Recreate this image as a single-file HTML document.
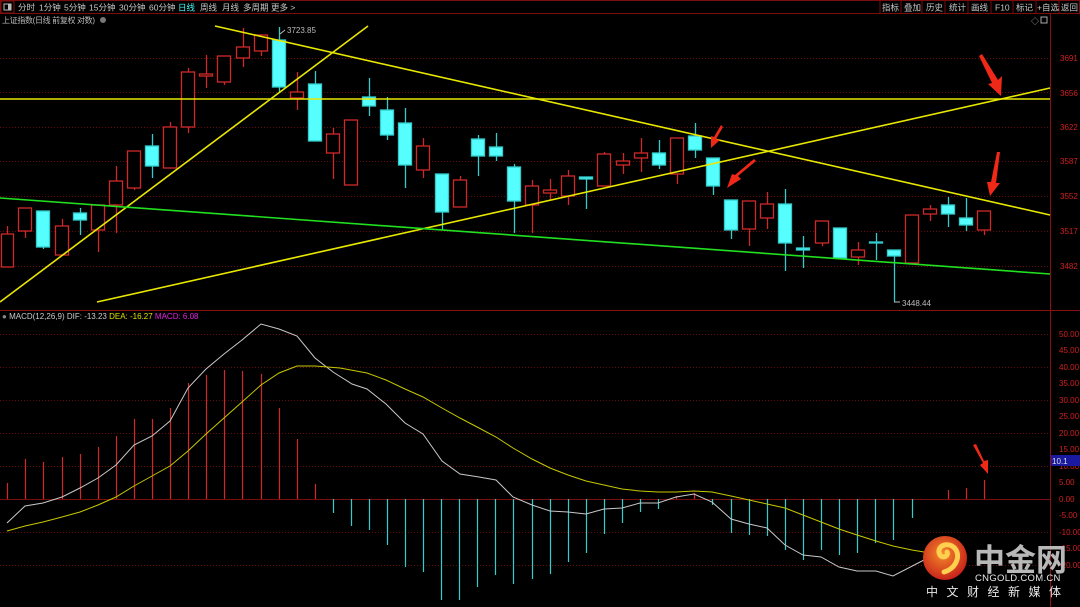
<!DOCTYPE html>
<html><head><meta charset="utf-8"><style>
html,body{margin:0;padding:0;background:#000;width:1080px;height:607px;overflow:hidden}
svg{display:block}
text{font-family:"Liberation Sans","Noto Sans CJK SC",sans-serif}
</style></head><body>
<svg width="1080" height="607" viewBox="0 0 1080 607" xmlns="http://www.w3.org/2000/svg">
<rect width="1080" height="607" fill="#000"/>
<!-- toolbar -->
<rect x="0.5" y="0.5" width="1079" height="13" fill="#000" stroke="#7a0d0d"/>
<rect x="1" y="1" width="13" height="12" fill="none" stroke="#8a1010"/>
<rect x="4" y="4" width="7" height="6" fill="none" stroke="#bbb" stroke-width="1"/>
<rect x="8" y="4" width="3" height="6" fill="#bbb"/>
<g font-size="8.5" fill="#c8c8c8">
<text x="18" y="10.5">分时</text><text x="39" y="10.5">1分钟</text><text x="64" y="10.5">5分钟</text><text x="89" y="10.5">15分钟</text><text x="119" y="10.5">30分钟</text><text x="149" y="10.5">60分钟</text><text x="178" y="10.5" fill="#4ff">日线</text><text x="200" y="10.5">周线</text><text x="222" y="10.5">月线</text><text x="243" y="10.5">多周期</text><text x="271" y="10.5">更多 &gt;</text>
</g>
<g stroke="#7a0d0d"><line x1="880" y1="0" x2="880" y2="14"/><line x1="901" y1="0" x2="901" y2="14"/><line x1="922" y1="0" x2="922" y2="14"/><line x1="945" y1="0" x2="945" y2="14"/><line x1="968" y1="0" x2="968" y2="14"/><line x1="991" y1="0" x2="991" y2="14"/><line x1="1013" y1="0" x2="1013" y2="14"/><line x1="1036" y1="0" x2="1036" y2="14"/><line x1="1059" y1="0" x2="1059" y2="14"/></g>
<g font-size="8.5" fill="#c8c8c8"><text x="882" y="10.5">指标</text><text x="904" y="10.5">叠加</text><text x="926" y="10.5">历史</text><text x="949" y="10.5">统计</text><text x="971" y="10.5">画线</text><text x="995" y="10.5">F10</text><text x="1016" y="10.5">标记</text><text x="1037" y="10.5">+自选</text><text x="1061" y="10.5">返回</text></g>
<text x="2" y="23" font-size="8" fill="#bbb" textLength="93">上证指数(日线 前复权 对数)</text>
<circle cx="103" cy="20" r="3" fill="#777"/>
<text x="1031" y="24" font-size="8" fill="#aaa">◇</text><rect x="1041" y="17" width="6" height="6" fill="none" stroke="#aaa"/>
<!-- grid -->
<g stroke="#6a0a0a" stroke-dasharray="1,2" stroke-width="1">
<line x1="0" y1="58.5" x2="1050" y2="58.5"/><line x1="0" y1="92.5" x2="1050" y2="92.5"/><line x1="0" y1="127.5" x2="1050" y2="127.5"/><line x1="0" y1="161.5" x2="1050" y2="161.5"/><line x1="0" y1="196.5" x2="1050" y2="196.5"/><line x1="0" y1="231.5" x2="1050" y2="231.5"/><line x1="0" y1="266.5" x2="1050" y2="266.5"/>
<line x1="0" y1="334.5" x2="1050" y2="334.5"/><line x1="0" y1="367.5" x2="1050" y2="367.5"/><line x1="0" y1="400.5" x2="1050" y2="400.5"/><line x1="0" y1="433.5" x2="1050" y2="433.5"/><line x1="0" y1="466.5" x2="1050" y2="466.5"/><line x1="0" y1="532.5" x2="1050" y2="532.5"/><line x1="0" y1="565.5" x2="1050" y2="565.5"/>
</g>
<line x1="0" y1="499.5" x2="1050" y2="499.5" stroke="#7a0d0d"/>
<line x1="0" y1="310.5" x2="1080" y2="310.5" stroke="#8a1010"/>
<line x1="1050.5" y1="14" x2="1050.5" y2="607" stroke="#8a1010"/>
<g font-size="8" fill="#d02020">
<text x="1060" y="61">3691</text><text x="1060" y="96">3656</text><text x="1060" y="130">3622</text><text x="1060" y="164">3587</text><text x="1060" y="199">3552</text><text x="1060" y="234">3517</text><text x="1060" y="269">3482</text>
</g>
<g font-size="8" fill="#d02020">
<text x="1059" y="337">50.00</text><text x="1059" y="353">45.00</text><text x="1059" y="370">40.00</text><text x="1059" y="386">35.00</text><text x="1059" y="403">30.00</text><text x="1059" y="419">25.00</text><text x="1059" y="436">20.00</text><text x="1059" y="452">15.00</text><text x="1059" y="469">10.00</text><text x="1059" y="485">5.00</text><text x="1059" y="502">0.00</text><text x="1059" y="518">-5.00</text><text x="1059" y="535">-10.00</text><text x="1059" y="551">-15.00</text><text x="1059" y="568">-20.00</text>
</g>
<rect x="1051" y="455" width="29" height="11" fill="#1a1aa0"/>
<text x="1052" y="464" font-size="8" fill="#ddd">10.1</text>
<!-- candles -->
<g stroke-width="1.3">
<g stroke="#d02828" fill="#000">
<line x1="7.5" y1="226" x2="7.5" y2="234"/><rect x="1.5" y="234" width="12" height="33"/>
<line x1="25.5" y1="231" x2="25.5" y2="238"/><rect x="18.5" y="208" width="13" height="23"/>
<line x1="62.5" y1="219" x2="62.5" y2="226"/><rect x="55.5" y="226" width="13" height="29"/>
<line x1="98.5" y1="230" x2="98.5" y2="252"/><rect x="91.5" y="205" width="13" height="25"/>
<line x1="116.5" y1="166" x2="116.5" y2="233"/><rect x="109.5" y="181" width="13" height="24"/>
<line x1="134.5" y1="188" x2="134.5" y2="190"/><rect x="127.5" y="151" width="13" height="37"/>
<line x1="170.5" y1="122" x2="170.5" y2="127"/><rect x="163.5" y="127" width="13" height="41"/>
<line x1="188.5" y1="68" x2="188.5" y2="133"/><rect x="181.5" y="72" width="13" height="55"/>
<line x1="206.5" y1="55" x2="206.5" y2="88"/><rect x="199.5" y="74" width="13" height="2"/>
<line x1="224.5" y1="82" x2="224.5" y2="85"/><rect x="217.5" y="56" width="13" height="26"/>
<line x1="243.5" y1="28" x2="243.5" y2="67"/><rect x="236.5" y="47" width="13" height="11"/>
<line x1="261.5" y1="51" x2="261.5" y2="56"/><rect x="254.5" y="35" width="13" height="16"/>
<line x1="297.5" y1="72" x2="297.5" y2="110"/><rect x="290.5" y="92" width="13" height="6"/>
<line x1="333.5" y1="128" x2="333.5" y2="179"/><rect x="326.5" y="134" width="13" height="19"/>
<rect x="344.5" y="120" width="13" height="65"/>
<line x1="423.5" y1="138" x2="423.5" y2="178"/><rect x="416.5" y="146" width="13" height="24"/>
<line x1="460.5" y1="176" x2="460.5" y2="180"/><rect x="453.5" y="180" width="13" height="27"/>
<line x1="532.5" y1="180" x2="532.5" y2="233"/><rect x="525.5" y="186" width="13" height="19"/>
<line x1="550.5" y1="179" x2="550.5" y2="200"/><rect x="543.5" y="190" width="13" height="3"/>
<line x1="568.5" y1="170" x2="568.5" y2="205"/><rect x="561.5" y="176" width="13" height="20"/>
<line x1="604.5" y1="152" x2="604.5" y2="154"/><rect x="597.5" y="154" width="13" height="32"/>
<line x1="623.5" y1="153" x2="623.5" y2="174"/><rect x="616.5" y="161" width="13" height="4"/>
<line x1="641.5" y1="138" x2="641.5" y2="172"/><rect x="634.5" y="153" width="13" height="5"/>
<line x1="677.5" y1="174" x2="677.5" y2="184"/><rect x="670.5" y="138" width="13" height="36"/>
<line x1="749.5" y1="229" x2="749.5" y2="246"/><rect x="742.5" y="201" width="13" height="28"/>
<line x1="767.5" y1="192" x2="767.5" y2="229"/><rect x="760.5" y="204" width="13" height="14"/>
<line x1="822.5" y1="243" x2="822.5" y2="246"/><rect x="815.5" y="221" width="13" height="22"/>
<line x1="858.5" y1="242" x2="858.5" y2="265"/><rect x="851.5" y="250" width="13" height="7"/>
<rect x="905.5" y="215" width="13" height="48"/>
<line x1="930.5" y1="205" x2="930.5" y2="221"/><rect x="923.5" y="209" width="13" height="5"/>
<line x1="984.5" y1="230" x2="984.5" y2="235"/><rect x="977.5" y="211" width="13" height="19"/>
</g>
<g stroke="#3cc" fill="#5ff">
<line x1="43.5" y1="247" x2="43.5" y2="249"/><rect x="36.5" y="211" width="13" height="36"/>
<line x1="80.5" y1="208" x2="80.5" y2="235"/><rect x="73.5" y="213" width="13" height="7"/>
<line x1="152.5" y1="134" x2="152.5" y2="178"/><rect x="145.5" y="146" width="13" height="20"/>
<line x1="279.5" y1="27" x2="279.5" y2="93"/><rect x="272.5" y="40" width="13" height="47"/>
<line x1="315.5" y1="71" x2="315.5" y2="84"/><rect x="308.5" y="84" width="13" height="57"/>
<line x1="369.5" y1="78" x2="369.5" y2="116"/><rect x="362.5" y="97" width="13" height="9"/>
<line x1="387.5" y1="97" x2="387.5" y2="140"/><rect x="380.5" y="110" width="13" height="25"/>
<line x1="405.5" y1="108" x2="405.5" y2="188"/><rect x="398.5" y="123" width="13" height="42"/>
<line x1="442.5" y1="212" x2="442.5" y2="230"/><rect x="435.5" y="174" width="13" height="38"/>
<line x1="478.5" y1="135" x2="478.5" y2="176"/><rect x="471.5" y="139" width="13" height="17"/>
<line x1="496.5" y1="133" x2="496.5" y2="161"/><rect x="489.5" y="147" width="13" height="9"/>
<line x1="514.5" y1="164" x2="514.5" y2="233"/><rect x="507.5" y="167" width="13" height="34"/>
<line x1="586.5" y1="177" x2="586.5" y2="209"/><rect x="579.5" y="177" width="13" height="2"/>
<line x1="659.5" y1="140" x2="659.5" y2="169"/><rect x="652.5" y="153" width="13" height="12"/>
<line x1="695.5" y1="123" x2="695.5" y2="158"/><rect x="688.5" y="136" width="13" height="14"/>
<line x1="713.5" y1="186" x2="713.5" y2="195"/><rect x="706.5" y="158" width="13" height="28"/>
<line x1="731.5" y1="230" x2="731.5" y2="239"/><rect x="724.5" y="200" width="13" height="30"/>
<line x1="785.5" y1="189" x2="785.5" y2="271"/><rect x="778.5" y="204" width="13" height="39"/>
<line x1="803.5" y1="236" x2="803.5" y2="268"/><rect x="796.5" y="248" width="13" height="2"/>
<rect x="833.5" y="228" width="13" height="30"/>
<line x1="876.5" y1="233" x2="876.5" y2="260"/><rect x="869.5" y="242" width="13" height="1"/>
<line x1="894.5" y1="256" x2="894.5" y2="302"/><rect x="887.5" y="250" width="13" height="6"/>
<line x1="948.5" y1="197" x2="948.5" y2="227"/><rect x="941.5" y="205" width="13" height="9"/>
<line x1="966.5" y1="198" x2="966.5" y2="231"/><rect x="959.5" y="218" width="13" height="7"/>
</g>
</g>
<g font-size="8" fill="#bbb"><text x="287" y="33">3723.85</text><text x="902" y="306">3448.44</text></g>
<path d="M280 34 L285 30 M894 302 L900 302" stroke="#bbb" fill="none"/>
<!-- trend lines -->
<g stroke-width="1.6" fill="none">
<line x1="0" y1="99" x2="1050" y2="99" stroke="#e8e800"/>
<line x1="0" y1="302" x2="368" y2="26" stroke="#e8e800"/>
<line x1="215" y1="26" x2="1050" y2="215" stroke="#e8e800"/>
<line x1="97" y1="302" x2="1050" y2="88" stroke="#e8e800"/>
<line x1="0" y1="198" x2="1050" y2="274" stroke="#20e020"/>
</g>
<!-- arrows -->
<g fill="#f02818">
<polygon points="979,56 982,54 998,80 1002,76 1001,96 988,84 992,83"/>
<polygon points="721,125 723,127 716,139 720,140 711,148 711,136 714,137"/>
<polygon points="754,159 756,161 738,176 741,179 727,188 732,174 735,175"/>
<polygon points="997,152 1000,152 996,183 1000,183 990,196 987,182 991,182"/>
<polygon points="973,445 976,444 984,461 988,460 988,474 980,465 983,463"/>
</g>
<!-- MACD -->
<text x="2" y="319" font-size="8" fill="#ccc"><tspan fill="#888">●</tspan> MACD(12,26,9)  DIF: -13.23 <tspan fill="#e0e000">DEA: -16.27</tspan> <tspan fill="#e020e0">MACD: 6.08</tspan></text>
<g stroke="#d02828" stroke-width="1.2">
<line x1="7.5" y1="499" x2="7.5" y2="483"/><line x1="25.5" y1="499" x2="25.5" y2="459"/><line x1="43.5" y1="499" x2="43.5" y2="462"/><line x1="62.5" y1="499" x2="62.5" y2="457"/><line x1="80.5" y1="499" x2="80.5" y2="454"/><line x1="98.5" y1="499" x2="98.5" y2="447"/><line x1="116.5" y1="499" x2="116.5" y2="436"/><line x1="134.5" y1="499" x2="134.5" y2="419"/><line x1="152.5" y1="499" x2="152.5" y2="419"/><line x1="170.5" y1="499" x2="170.5" y2="408"/><line x1="188.5" y1="499" x2="188.5" y2="383"/><line x1="206.5" y1="499" x2="206.5" y2="375"/><line x1="224.5" y1="499" x2="224.5" y2="370"/><line x1="242.5" y1="499" x2="242.5" y2="371"/><line x1="261.5" y1="499" x2="261.5" y2="374"/><line x1="279.5" y1="499" x2="279.5" y2="408"/><line x1="297.5" y1="499" x2="297.5" y2="439"/><line x1="315.5" y1="499" x2="315.5" y2="484"/>
<line x1="676.5" y1="499" x2="676.5" y2="496"/><line x1="694.5" y1="499" x2="694.5" y2="493"/>
<line x1="948.5" y1="499" x2="948.5" y2="490"/><line x1="966.5" y1="499" x2="966.5" y2="488"/><line x1="984.5" y1="499" x2="984.5" y2="480"/>
</g>
<g stroke="#3cc" stroke-width="1.2">
<line x1="333.5" y1="499" x2="333.5" y2="513"/><line x1="351.5" y1="499" x2="351.5" y2="526"/><line x1="369.5" y1="499" x2="369.5" y2="530"/><line x1="387.5" y1="499" x2="387.5" y2="545"/><line x1="405.5" y1="499" x2="405.5" y2="567"/><line x1="423.5" y1="499" x2="423.5" y2="572"/><line x1="441.5" y1="499" x2="441.5" y2="600"/><line x1="459.5" y1="499" x2="459.5" y2="600"/><line x1="477.5" y1="499" x2="477.5" y2="587"/><line x1="495.5" y1="499" x2="495.5" y2="575"/><line x1="513.5" y1="499" x2="513.5" y2="584"/><line x1="532.5" y1="499" x2="532.5" y2="579"/><line x1="550.5" y1="499" x2="550.5" y2="574"/><line x1="568.5" y1="499" x2="568.5" y2="562"/><line x1="586.5" y1="499" x2="586.5" y2="553"/><line x1="604.5" y1="499" x2="604.5" y2="534"/><line x1="622.5" y1="499" x2="622.5" y2="523"/><line x1="640.5" y1="499" x2="640.5" y2="512"/><line x1="658.5" y1="499" x2="658.5" y2="509"/><line x1="712.5" y1="499" x2="712.5" y2="505"/><line x1="731.5" y1="499" x2="731.5" y2="533"/><line x1="749.5" y1="499" x2="749.5" y2="535"/><line x1="767.5" y1="499" x2="767.5" y2="536"/><line x1="785.5" y1="499" x2="785.5" y2="550"/><line x1="803.5" y1="499" x2="803.5" y2="560"/><line x1="821.5" y1="499" x2="821.5" y2="550"/><line x1="839.5" y1="499" x2="839.5" y2="555"/><line x1="857.5" y1="499" x2="857.5" y2="553"/><line x1="875.5" y1="499" x2="875.5" y2="543"/><line x1="893.5" y1="499" x2="893.5" y2="540"/><line x1="912.5" y1="499" x2="912.5" y2="518"/>
</g>
<polyline fill="none" stroke="#c8c8c8" stroke-width="1" points="7,523 25,506 43,503 62,497 80,488 98,478 116,465 134,445 152,436 170,421 188,388 206,369 224,354 242,340 261,324 279,329 297,336 315,358 333,372 352,384 367,389 386,404 405,423 423,434 442,461 460,474 479,477 496,480 513,497 532,505 550,511 568,512 586,514 604,509 622,508 640,503 658,503 676,497 694,494 712,502 731,519 749,524 767,528 785,545 803,555 821,557 839,567 857,571 876,571 893,576 922,561 940,553"/>
<polyline fill="none" stroke="#c8c800" stroke-width="1" points="7,531 25,526 43,522 62,517 80,512 98,505 116,497 134,486 152,476 170,466 188,451 206,434 224,418 242,402 261,385 279,373 297,366 315,366 340,368 367,373 386,380 405,389 423,397 442,408 460,418 479,428 496,437 513,448 532,459 550,468 568,475 586,481 604,485 622,489 640,491 658,492 676,492 694,491 712,492 731,496 749,500 767,504 785,508 803,515 821,522 839,529 857,535 876,541 893,546 912,550 930,553"/>
<!-- logo -->
<defs><radialGradient id="g" cx="45%" cy="40%" r="60%"><stop offset="0" stop-color="#f58a2a"/><stop offset="1" stop-color="#c8241a"/></radialGradient></defs>
<circle cx="945" cy="558" r="22" fill="url(#g)"/>
<path d="M944 572 C958 568 962 552 952 546 C944 542 936 548 940 555 C943 559 949 556 947 552" fill="none" stroke="#ffd050" stroke-width="5" stroke-linecap="round"/>
<text x="974" y="571" font-size="31" font-weight="bold" fill="#b8b8b8" font-family="'Noto Sans CJK SC',sans-serif">中金网</text>
<text x="975" y="581" font-size="9.5" fill="#e8e8e8" letter-spacing="0.3">CNGOLD.COM.CN</text>
<text x="926" y="596" font-size="12" fill="#e8e8e8" letter-spacing="8.5">中文财经新媒体</text>
</svg>
</body></html>
